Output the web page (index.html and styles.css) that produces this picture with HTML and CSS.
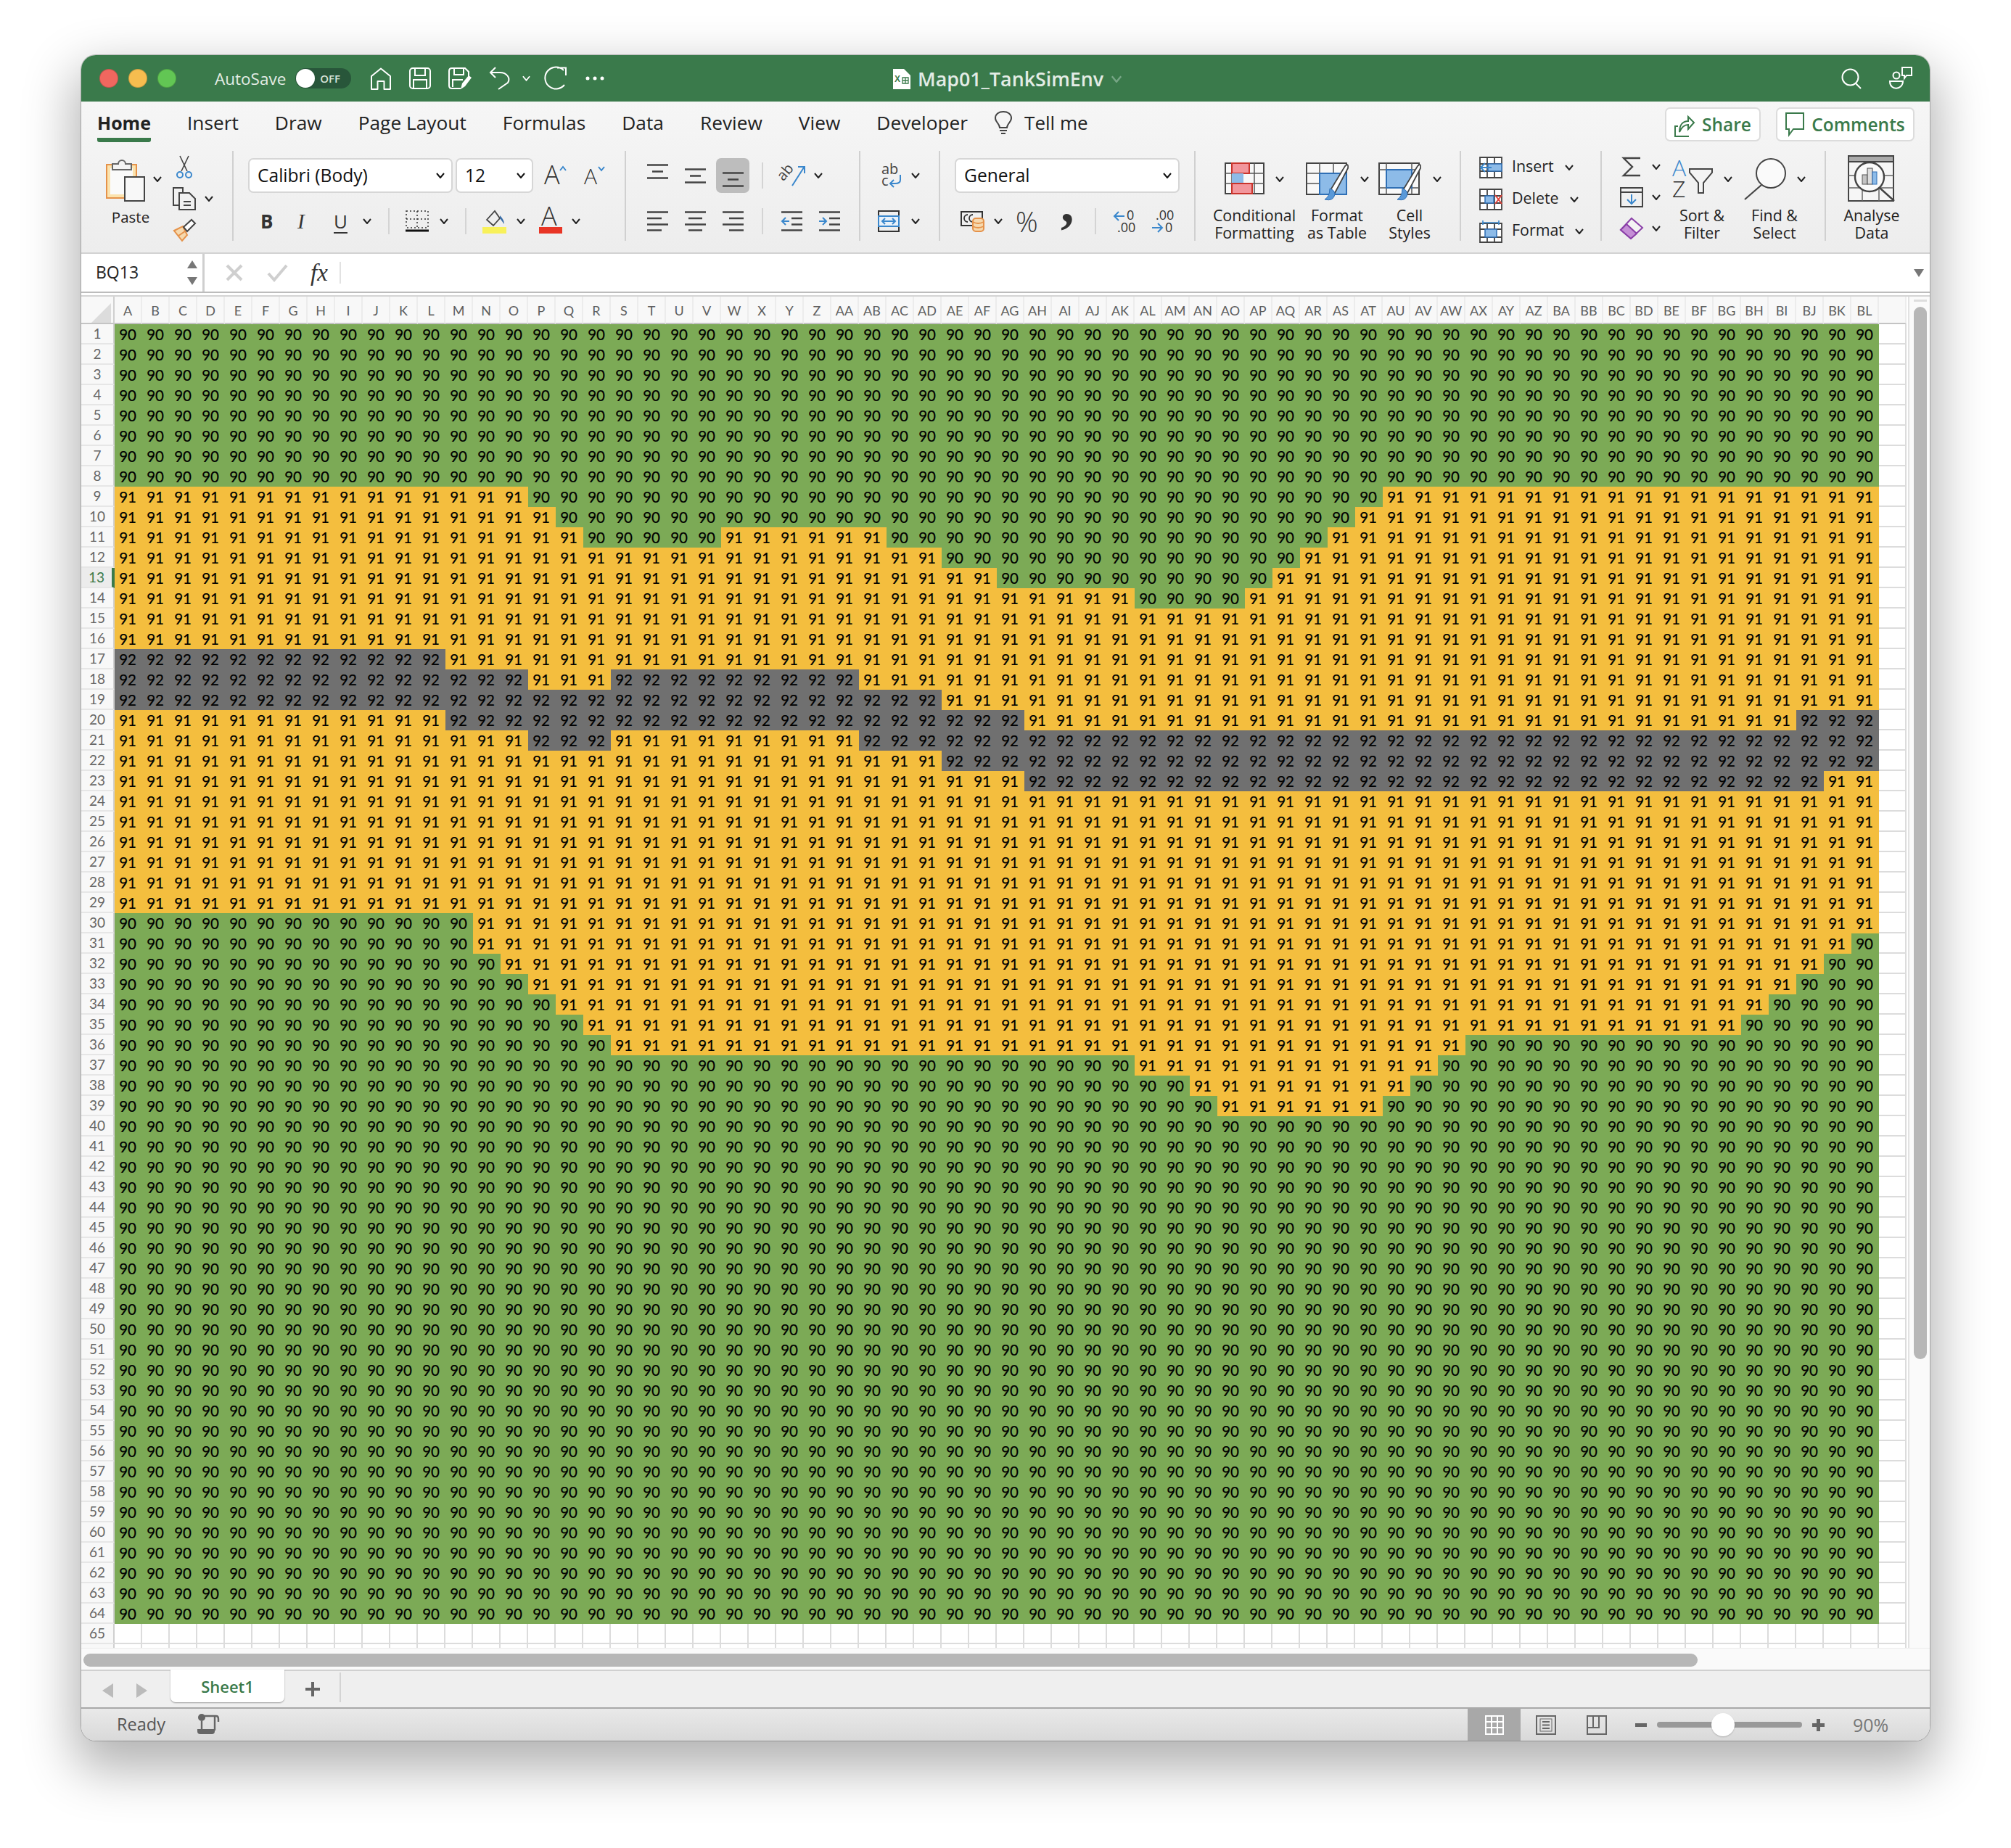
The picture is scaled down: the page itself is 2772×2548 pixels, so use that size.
FILE: index.html
```html
<!DOCTYPE html>
<html lang="en">
<head>
  <meta charset="UTF-8">
  <title>Map01_TankSimEnv</title>
  <link rel="stylesheet" href="styles.css">
</head>
<body>

  <!-- shared small icons -->
  <svg class="defs" width="0" height="0">
    <symbol id="chev" viewBox="0 0 12 8"><path d="M1 1 L6 7 L11 1" fill="none" stroke="currentColor" stroke-width="2"/></symbol>
    <symbol id="al-top" viewBox="0 0 29 21"><path d="M0 1.5H29M7 10.5H22M0 19.5H29" stroke="#444" stroke-width="2.4"/></symbol>
    <symbol id="al-left" viewBox="0 0 29 28"><path d="M0 1.5H29M0 10H20M0 18.5H29M0 26.5H20" stroke="#444" stroke-width="2.4"/></symbol>
    <symbol id="al-center" viewBox="0 0 29 28"><path d="M0 1.5H29M5 10H24M0 18.5H29M5 26.5H24" stroke="#444" stroke-width="2.4"/></symbol>
    <symbol id="al-right" viewBox="0 0 29 28"><path d="M0 1.5H29M9 10H29M0 18.5H29M9 26.5H29" stroke="#444" stroke-width="2.4"/></symbol>
  </svg>

  <div class="window">

    <header class="titlebar">
      <div class="lights"><i class="light red"></i><i class="light amber"></i><i class="light lime"></i></div>
      <span class="autosave">AutoSave</span>
      <span class="toggle"><i class="knob"></i><b>OFF</b></span>
      <div class="quick">
        <svg width="30" height="31" viewBox="0 0 30 31"><path d="M2 30V12L15 1.5L28 12V30H19.500V19H10.500V30Z" fill="none" stroke="#fff" stroke-width="2" stroke-linejoin="round"/></svg>
        <svg width="30" height="30" viewBox="0 0 30 30"><g fill="none" stroke="#fff" stroke-width="2"><rect x="1" y="1" width="28" height="28" rx="4"/><path d="M8 1V11H22V1M6 29V17H24V29"/></g></svg>
        <svg width="32" height="31" viewBox="0 0 32 31"><g fill="none" stroke="#fff" stroke-width="2"><path d="M17 29H5Q1 29 1 25V5Q1 1 5 1H23L28 6V13"/><path d="M8 1V10H21V1M6 27V17H20"/></g><path d="M17 30L19 22L28 11L32 14L23 26Z" fill="#fff"/></svg>
        <svg class="undo" width="30" height="32" viewBox="0 0 30 32"><path d="M9 1L2 8L9 15M2 8H15C25 8 30 16 26 22L13 31" fill="none" stroke="#fff" stroke-width="2"/></svg>
        <svg class="chev-sm" width="11" height="8"><use href="#chev"/></svg>
        <svg class="redo" width="33" height="32" viewBox="0 0 33 32"><path d="M19 1.500H31V12M28 5A15 15 0 1 0 29 25" fill="none" stroke="#fff" stroke-width="2"/></svg>
        <svg class="dots" width="26" height="6" viewBox="0 0 26 6"><circle cx="3" cy="3" r="2.500" fill="#fff"/><circle cx="13" cy="3" r="2.500" fill="#fff"/><circle cx="23" cy="3" r="2.500" fill="#fff"/></svg>
      </div>
      <div class="doc-title">
        <svg width="24" height="30" viewBox="0 0 24 30"><path d="M0 1H15L24 10V29H0Z" fill="#fff"/><text x="2" y="19" class="xl-x">X</text><path d="M13 13h8v8h-8zM13 17h8M17 13v8" fill="none" stroke="#3a7a4b" stroke-width="1.300"/></svg>
        <span>Map01_TankSimEnv</span>
        <svg class="faint-chev" width="16" height="10"><use href="#chev"/></svg>
      </div>
      <div class="title-right">
        <svg width="28" height="29" viewBox="0 0 28 29"><circle cx="12.500" cy="12.500" r="11" fill="none" stroke="#fff" stroke-width="2"/><path d="M20 21L27 28" stroke="#fff" stroke-width="2"/></svg>
        <svg width="33" height="32" viewBox="0 0 33 32"><g fill="none" stroke="#fff" stroke-width="2"><circle cx="10" cy="12" r="4.500"/><path d="M1 20H19C19 32 1 34 1 20Z"/><path d="M18 1H31V12H24L21 16V12H18Z"/></g></svg>
      </div>
    </header>

    <section class="ribbon">
      <nav class="ribbon-tabs">
        <a class="tab active">Home</a>
        <a class="tab">Insert</a>
        <a class="tab">Draw</a>
        <a class="tab">Page Layout</a>
        <a class="tab">Formulas</a>
        <a class="tab">Data</a>
        <a class="tab">Review</a>
        <a class="tab">View</a>
        <a class="tab">Developer</a>
        <span class="tell">
          <svg width="24" height="32" viewBox="0 0 24 32"><path d="M7 23C7 18 1 15 1 10C1 4 6 1 12 1S23 4 23 10C23 15 17 18 17 23ZM7 27H17M9 31H15" fill="none" stroke="#444" stroke-width="2"/></svg>
          Tell me
        </span>
        <div class="share-box">
          <a class="pill p-share">
            <svg width="28" height="36" viewBox="0 0 28 36"><path d="M20 34H1V20H5M7 28C7 18 12 13 19 13V7L27 15L19 24V18C14 18 10 21 7 28Z" fill="none" stroke="#3a7a4b" stroke-width="2"/></svg>
            Share
          </a>
          <a class="pill p-comments">
            <svg width="26" height="36" viewBox="0 0 26 36"><path d="M1 2H25V24H11L5 32V24H1Z" fill="none" stroke="#3a7a4b" stroke-width="2"/></svg>
            Comments
          </a>
        </div>
      </nav>

      <div class="ribbon-body">

        <div class="group g-clip">
          <div class="big paste">
            <div class="big-top">
              <svg width="54" height="60" viewBox="0 0 54 60">
                <rect x="1" y="9" width="41" height="46" fill="#fbe3ae" stroke="#e5924a" stroke-width="2"/>
                <rect x="6" y="14" width="31" height="36" fill="#fafafa"/>
                <path d="M9 16V8H17A5 5 0 0 1 27 8H35V16Z" fill="#f4f4f4" stroke="#666" stroke-width="2"/>
                <rect x="26" y="26" width="27" height="33" fill="#f8f8f8" stroke="#444" stroke-width="2"/>
              </svg>
              <svg class="chev" width="12" height="8"><use href="#chev"/></svg>
            </div>
            <span class="label">Paste</span>
          </div>
          <div class="clip-tools">
            <div class="tool-row">
              <svg width="32" height="32" viewBox="0 0 32 32"><path d="M10 1L20 22M22 1L12 22" stroke="#444" stroke-width="1.600" fill="none"/><circle cx="10" cy="27" r="4" fill="none" stroke="#3a87cc" stroke-width="2"/><circle cx="22" cy="27" r="4" fill="none" stroke="#3a87cc" stroke-width="2"/></svg>
            </div>
            <div class="tool-row">
              <svg width="32" height="32" viewBox="0 0 32 32"><g fill="none" stroke="#444" stroke-width="2"><path d="M9 25H1V1H14V7"/><path d="M9 8H23L31 16V31H9Z"/><path d="M15 20H25M15 25H25"/></g></svg>
              <svg class="chev" width="12" height="8"><use href="#chev"/></svg>
            </div>
            <div class="tool-row">
              <svg width="32" height="30" viewBox="0 0 32 30"><path d="M2 16L14 10L20 22L13 30Z" fill="#f6d9ae" stroke="#e5924a" stroke-width="2"/><path d="M8 23L17 17" stroke="#e5924a" stroke-width="2"/><path d="M15 11L20 17L31 6L26 1Z" fill="#fff" stroke="#444" stroke-width="2"/></svg>
            </div>
          </div>
        </div>

        <div class="group g-font rows">
          <div class="row font-r1">
            <div class="select s-font"><span>Calibri (Body)</span><svg class="chev" width="12" height="8"><use href="#chev"/></svg></div>
            <div class="select s-size"><span>12</span><svg class="chev" width="12" height="8"><use href="#chev"/></svg></div>
            <svg width="32" height="30" viewBox="0 0 32 30"><text x="0" y="27" class="ic-a big-a">A</text><path d="M22 8L26 3L30 8" fill="none" stroke="#3a87cc" stroke-width="2"/></svg>
            <svg width="30" height="30" viewBox="0 0 30 30"><text x="0" y="27" class="ic-a small-a">A</text><path d="M20 3L24 8L28 3" fill="none" stroke="#3a87cc" stroke-width="2"/></svg>
          </div>
          <div class="row font-r2">
            <span class="fmt bold">B</span>
            <span class="fmt italic">I</span>
            <span class="fmt under">U</span>
            <svg class="chev" width="12" height="8"><use href="#chev"/></svg>
            <i class="sep"></i>
            <svg width="32" height="30" viewBox="0 0 32 30"><path d="M1 1H31V24H1ZM16 1V24M1 12H31" fill="none" stroke="#333" stroke-width="1.500" stroke-dasharray="2 3"/><path d="M0 28H32" stroke="#111" stroke-width="3"/></svg>
            <svg class="chev" width="12" height="8"><use href="#chev"/></svg>
            <i class="sep"></i>
            <svg width="33" height="33" viewBox="0 0 33 33"><path d="M6 14L17 2L24 12L15 22Z" fill="none" stroke="#444" stroke-width="1.800"/><path d="M24 8Q30 14 30 20Q27 16 24 12Z" fill="#3a6ea8"/><rect x="0" y="24" width="33" height="9" fill="#f8f15a"/></svg>
            <svg class="chev" width="12" height="8"><use href="#chev"/></svg>
            <svg width="32" height="33" viewBox="0 0 32 33"><text x="3" y="22" class="ic-a big-a">A</text><rect x="0" y="24" width="32" height="9" fill="#e83525"/></svg>
            <svg class="chev" width="12" height="8"><use href="#chev"/></svg>
          </div>
        </div>

        <div class="group g-align rows">
          <div class="row align-r1">
            <svg class="up-9" width="29" height="21"><use href="#al-top"/></svg>
            <svg width="29" height="21"><use href="#al-top"/></svg>
            <span class="active-box"><svg width="29" height="21"><use href="#al-top"/></svg></span>
            <i class="sep"></i>
            <svg class="orient" width="36" height="32" viewBox="0 0 36 32"><text x="-4" y="16" class="ic-ab" transform="rotate(-50 8 14)">ab</text><path d="M14 30L30 5M22 4H31V13" fill="none" stroke="#3a87cc" stroke-width="2"/></svg>
            <svg class="chev" width="12" height="8"><use href="#chev"/></svg>
          </div>
          <div class="row align-r2">
            <svg width="29" height="28"><use href="#al-left"/></svg>
            <svg width="29" height="28"><use href="#al-center"/></svg>
            <svg width="29" height="28"><use href="#al-right"/></svg>
            <i class="sep"></i>
            <svg width="29" height="28" viewBox="0 0 29 28"><path d="M0 1.500H29M14 10H29M14 18.500H29M0 26.500H29" stroke="#444" stroke-width="2.400"/><path d="M11 14H1M6 9L1 14L6 19" fill="none" stroke="#3a87cc" stroke-width="2"/></svg>
            <svg width="29" height="28" viewBox="0 0 29 28"><path d="M0 1.500H29M14 10H29M14 18.500H29M0 26.500H29" stroke="#444" stroke-width="2.400"/><path d="M0 14H10M5 9L10 14L5 19" fill="none" stroke="#3a87cc" stroke-width="2"/></svg>
          </div>
        </div>

        <div class="group g-wrap rows">
          <div class="row wrap-r1">
            <svg width="30" height="32" viewBox="0 0 30 32"><text x="1" y="14" class="ic-ab">ab</text><text x="1" y="30" class="ic-ab">c</text><path d="M27 15V22Q27 27 20 27H14M18 22L13 27L18 32" fill="none" stroke="#3a87cc" stroke-width="2"/></svg>
            <svg class="chev" width="12" height="8"><use href="#chev"/></svg>
          </div>
          <div class="row wrap-r2">
            <svg width="30" height="30" viewBox="0 0 30 30"><rect x="1" y="1" width="28" height="28" fill="none" stroke="#333" stroke-width="2"/><path d="M1 8H29V22H1Z" fill="#e8f1fa" stroke="#3a87cc" stroke-width="2"/><path d="M6 15H24M10 11L6 15L10 19M20 11L24 15L20 19" fill="none" stroke="#3a87cc" stroke-width="2"/></svg>
            <svg class="chev" width="12" height="8"><use href="#chev"/></svg>
          </div>
        </div>

        <div class="group g-number rows">
          <div class="row num-r1">
            <div class="select s-general"><span>General</span><svg class="chev" width="12" height="8"><use href="#chev"/></svg></div>
          </div>
          <div class="row num-r2">
            <svg width="32" height="28" viewBox="0 0 32 28"><path d="M1 1H30V20H1Z" fill="none" stroke="#333" stroke-width="2"/><path d="M10 5A5 5 0 0 0 10 15M17 5A5 5 0 0 0 17 15" fill="none" stroke="#333" stroke-width="1.800"/><rect x="17" y="10" width="15" height="18" rx="4" fill="#f6d9ae" stroke="#e5924a" stroke-width="2"/><path d="M17 15Q24 19 32 15M17 21Q24 25 32 21" fill="none" stroke="#e5924a" stroke-width="1.800"/></svg>
            <svg class="chev" width="12" height="8"><use href="#chev"/></svg>
            <span class="pct">%</span>
            <span class="comma">,</span>
            <i class="sep"></i>
            <svg width="32" height="32" viewBox="0 0 32 32"><text x="19" y="14" class="ic-dec">0</text><text x="6" y="31" class="ic-dec">.00</text><path d="M16 9H2M8 3L2 9L8 15" fill="none" stroke="#3a87cc" stroke-width="2"/></svg>
            <svg width="32" height="32" viewBox="0 0 32 32"><text x="6" y="14" class="ic-dec">.00</text><text x="19" y="31" class="ic-dec">0</text><path d="M1 25H15M9 19L15 25L9 31" fill="none" stroke="#3a87cc" stroke-width="2"/></svg>
          </div>
        </div>

        <div class="group g-styles">
          <div class="big w-cf">
            <div class="big-top pt16">
              <svg width="55" height="44" viewBox="0 0 55 44">
                <path d="M1 1H54V43H1Z" fill="#f8f8f8" stroke="#444" stroke-width="2"/>
                <path d="M1 15H54M1 29H54M10 1V43M41 1V43" stroke="#555" stroke-width="1.500"/>
                <rect x="10" y="1" width="24" height="14" fill="#f2969c" stroke="#c9342c" stroke-width="2"/>
                <rect x="10" y="15" width="16" height="14" fill="#8dbbe8"/>
                <rect x="10" y="29" width="28" height="14" fill="#f2969c" stroke="#c9342c" stroke-width="2"/>
              </svg>
              <svg class="chev" width="12" height="8"><use href="#chev"/></svg>
            </div>
            <span class="label">Conditional</span>
            <span class="label">Formatting</span>
          </div>
          <div class="big w-ft">
            <div class="big-top pt16">
              <svg width="60" height="54" viewBox="0 0 60 54">
                <path d="M1 1H56V44H1Z" fill="#f8f8f8" stroke="#444" stroke-width="2"/>
                <path d="M1 15H56M1 29H56M19 1V44M38 1V44" stroke="#555" stroke-width="1.500"/>
                <rect x="19" y="15" width="37" height="29" fill="#8dbbe8" stroke="#2f6fb5" stroke-width="2"/>
                <path d="M34 38L54 5Q59 0 58 8L40 42Z" fill="#fff" stroke="#444" stroke-width="1.800"/>
                <path d="M33 36Q40 38 40 44Q38 54 26 51Q33 47 33 36Z" fill="#5a99d8" stroke="#2f6fb5"/>
              </svg>
              <svg class="chev" width="12" height="8"><use href="#chev"/></svg>
            </div>
            <span class="label">Format</span>
            <span class="label">as Table</span>
          </div>
          <div class="big w-cs">
            <div class="big-top pt16">
              <svg width="60" height="54" viewBox="0 0 60 54">
                <path d="M1 1H56V44H1Z" fill="#f8f8f8" stroke="#444" stroke-width="2"/>
                <path d="M1 10H56M1 35H56M11 1V44M46 1V44" stroke="#555" stroke-width="1.500"/>
                <rect x="11" y="10" width="35" height="25" fill="#8dbbe8" stroke="#2f6fb5" stroke-width="2"/>
                <path d="M34 38L54 5Q59 0 58 8L40 42Z" fill="#fff" stroke="#444" stroke-width="1.800"/>
                <path d="M33 36Q40 38 40 44Q38 54 26 51Q33 47 33 36Z" fill="#5a99d8" stroke="#2f6fb5"/>
              </svg>
              <svg class="chev" width="12" height="8"><use href="#chev"/></svg>
            </div>
            <span class="label">Cell</span>
            <span class="label">Styles</span>
          </div>
        </div>

        <div class="group g-cells">
          <div class="cell-row">
            <svg width="32" height="30" viewBox="0 0 32 30"><path d="M1 1H31V29H1ZM1 10H31M1 20H31M11 1V29M21 1V29" fill="#fff" stroke="#444" stroke-width="1.800"/><rect x="12" y="10" width="19" height="10" fill="#8dbbe8" stroke="#2f6fb5" stroke-width="1.500"/><path d="M17 15H2M8 9L2 15L8 21" fill="none" stroke="#3a87cc" stroke-width="2"/></svg>
            <span class="label">Insert</span>
            <svg class="chev" width="12" height="8"><use href="#chev"/></svg>
          </div>
          <div class="cell-row">
            <svg width="32" height="30" viewBox="0 0 32 30"><path d="M1 1H31V29H1ZM1 10H31M1 20H31M11 1V29M21 1V29" fill="#fff" stroke="#444" stroke-width="1.800"/><rect x="8" y="10" width="12" height="10" fill="#8dbbe8" stroke="#2f6fb5" stroke-width="1.500"/><path d="M22 9L31 21M31 9L22 21" stroke="#e2423a" stroke-width="2"/></svg>
            <span class="label">Delete</span>
            <svg class="chev" width="12" height="8"><use href="#chev"/></svg>
          </div>
          <div class="cell-row">
            <svg width="32" height="30" viewBox="0 0 32 30"><path d="M1 4H31V30H1ZM1 12H31M1 23H31M11 4V30M21 4V30" fill="#fff" stroke="#444" stroke-width="1.800"/><rect x="8" y="12" width="16" height="11" fill="#8dbbe8" stroke="#2f6fb5" stroke-width="1.500"/><path d="M5 0V6M27 0V6M5 3H27" fill="none" stroke="#3a87cc" stroke-width="1.600"/></svg>
            <span class="label">Format</span>
            <svg class="chev" width="12" height="8"><use href="#chev"/></svg>
          </div>
        </div>

        <div class="group g-edit">
          <div class="edit-tools">
            <div class="tool-row">
              <svg width="32" height="28" viewBox="0 0 32 28"><path d="M28 2H5L17 14L5 26H28" fill="none" stroke="#444" stroke-width="2.400"/></svg>
              <svg class="chev" width="12" height="8"><use href="#chev"/></svg>
            </div>
            <div class="tool-row">
              <svg width="32" height="28" viewBox="0 0 32 28"><path d="M1 1H31V27H1ZM1 7H31" fill="none" stroke="#444" stroke-width="2"/><path d="M16 10V23M10 17L16 23L22 17" fill="none" stroke="#3a87cc" stroke-width="2"/></svg>
              <svg class="chev" width="12" height="8"><use href="#chev"/></svg>
            </div>
            <div class="tool-row">
              <svg width="32" height="30" viewBox="0 0 32 30"><path d="M16 1L31 14L15 29L1 17Z" fill="#f4f4f4" stroke="#8a3fa8" stroke-width="2"/><path d="M9 9L23 22L15 29L1 17Z" fill="#c58fd6" stroke="#8a3fa8" stroke-width="2"/></svg>
              <svg class="chev" width="12" height="8"><use href="#chev"/></svg>
            </div>
          </div>
          <div class="big w-100">
            <div class="big-top pt11">
              <svg width="56" height="54" viewBox="0 0 56 54"><text x="0" y="24" class="ic-az blue">A</text><text x="0" y="53" class="ic-az">Z</text><path d="M24 14H55V19L43 33V47H36V33L24 19Z" fill="#f4f4f4" stroke="#444" stroke-width="2"/></svg>
              <svg class="chev" width="12" height="8"><use href="#chev"/></svg>
            </div>
            <span class="label">Sort &amp;</span>
            <span class="label">Filter</span>
          </div>
          <div class="big w-100">
            <div class="big-top pt10">
              <svg width="58" height="58" viewBox="0 0 58 58"><ellipse cx="37" cy="21" rx="20" ry="20" fill="#fafafa" stroke="#444" stroke-width="2"/><path d="M24 37L1 57" stroke="#444" stroke-width="2.200"/></svg>
              <svg class="chev" width="12" height="8"><use href="#chev"/></svg>
            </div>
            <span class="label">Find &amp;</span>
            <span class="label">Select</span>
          </div>
        </div>

        <div class="group g-data">
          <div class="big w-data">
            <div class="big-top pt6">
              <svg width="66" height="64" viewBox="0 0 66 64">
                <rect x="1" y="1" width="62" height="62" fill="#f6f6f6" stroke="#444" stroke-width="2"/>
                <rect x="1" y="1" width="62" height="8" fill="#aaa" stroke="#444" stroke-width="2"/>
                <path d="M1 28H63M1 45H63M20 45V63M43 45V63" stroke="#666" stroke-width="1.500"/>
                <circle cx="30" cy="30" r="20" fill="#fafafa" stroke="#444" stroke-width="2.400"/>
                <rect x="20" y="27" width="7" height="13" fill="#c4c4c4" stroke="#555"/>
                <rect x="27" y="18" width="7" height="22" fill="#ddd" stroke="#444"/>
                <rect x="34" y="23" width="6" height="17" fill="#8dbbe8" stroke="#2f6fb5"/>
                <path d="M44 45L64 63" stroke="#444" stroke-width="2.400"/>
              </svg>
            </div>
            <span class="label">Analyse</span>
            <span class="label">Data</span>
          </div>
        </div>

      </div>
    </section>

    <div class="formula-bar">
      <div class="name-box">
        <span>BQ13</span>
        <div class="spin"><i class="tri-up"></i><i class="tri-down"></i></div>
      </div>
      <svg class="fb-x" width="24" height="24" viewBox="0 0 24 24"><path d="M2 2L22 22M22 2L2 22" stroke="#cfcfcf" stroke-width="4"/></svg>
      <svg class="fb-check" width="29" height="24" viewBox="0 0 29 24"><path d="M2 13L10 22L27 2" fill="none" stroke="#cfcfcf" stroke-width="4"/></svg>
      <span class="fx">fx</span>
      <i class="fb-sep"></i>
      <i class="tri-down fb-more"></i>
    </div>

    <div class="sheet">
      <div class="grid" id="grid"></div>
      <div class="vscroll"><i class="vhandle"></i><i class="vthumb"></i></div>
    </div>

    <div class="hscroll"><i class="hthumb"></i></div>

    <div class="tabbar">
      <i class="nav-left"></i>
      <i class="nav-right"></i>
      <div class="sheet-tab">Sheet1</div>
      <span class="add-sheet"></span>
      <i class="tab-sep"></i>
    </div>

    <footer class="statusbar">
      <span class="ready">Ready</span>
      <svg width="30" height="28" viewBox="0 0 30 28"><circle cx="6" cy="5" r="5" fill="#666"/><path d="M10 3H26Q29 3 29 7V11M24 3V23M6 10V21" fill="none" stroke="#666" stroke-width="2.400"/><path d="M0 21H24V24Q24 28 20 28H4Q0 28 0 24Z" fill="#666"/></svg>
      <div class="status-right">
        <span class="view-btn on"><svg width="26" height="27" viewBox="0 0 26 27"><path d="M1 1H25V26H1ZM1 9H25M1 17H25M9 1V26M17 1V26" fill="none" stroke="#fff" stroke-width="2"/></svg></span>
        <span class="view-btn"><svg width="28" height="27" viewBox="0 0 28 27"><path d="M1 1H27V26H1Z" fill="none" stroke="#666" stroke-width="2"/><rect x="6" y="5" width="16" height="17" fill="none" stroke="#666"/><path d="M9 9H19M9 13.500H19M9 18H19" stroke="#666" stroke-width="2"/></svg></span>
        <span class="view-btn"><svg width="28" height="27" viewBox="0 0 28 27"><path d="M1 1H27V26H1ZM1 17H17V1M9 1V17" fill="none" stroke="#666" stroke-width="2"/></svg></span>
        <div class="zoom">
          <i class="zoom-minus"></i>
          <div class="slider"><i class="slider-knob"></i></div>
          <i class="zoom-plus"></i>
          <span class="zoom-val">90%</span>
        </div>
      </div>
    </footer>

  </div>

  <script src="script.js"></script>
</body>
</html>
```

FILE: styles.css
```css
* {
  box-sizing: border-box;
}

html, body {
  margin: 0;
  height: 2548px;
  overflow: hidden;
}

body {
  background-color: #fff;
  font-family: "Open Sans", sans-serif;
  color: #222;
}

i {
  display: block;
}

svg {
  overflow: visible;
}

.defs {
  position: absolute;
}

.window {
  width: 2548px;
  height: 2324px;
  margin: 76px 0 0 112px;
  border-radius: 20px;
  overflow: hidden;
  display: flex;
  flex-direction: column;
  box-shadow: 0 0 0 1px rgba(0, 0, 0, 0.22), 0 30px 70px 10px rgba(0, 0, 0, 0.3);
}

/* title bar */
.titlebar {
  height: 64px;
  flex: none;
  background-color: #3a7a4b;
  display: flex;
  align-items: center;
  color: #fff;
  position: relative;
}

.lights {
  display: flex;
  gap: 14px;
  margin-left: 25px;
}

.light {
  width: 26px;
  height: 26px;
  border-radius: 50%;
  border: 1px solid rgba(0, 0, 0, 0.18);
}

.red { background-color: #f0675f; }
.amber { background-color: #f6bd4f; }
.lime { background-color: #62c654; }

.autosave {
  margin-left: 53px;
  font-size: 22.500px;
  font-weight: 500;
  color: #e3ece5;
}

.toggle {
  margin-left: 13px;
  width: 77px;
  height: 28px;
  border-radius: 14px;
  background-color: #28563a;
  display: flex;
  align-items: center;
  gap: 7px;
  padding-left: 1px;
}

.knob {
  width: 26px;
  height: 26px;
  border-radius: 50%;
  background-color: #fff;
}

.toggle b {
  font-size: 15px;
  font-weight: 600;
  color: #d8e4db;
}

.quick {
  display: flex;
  align-items: center;
  margin-left: 26px;
  gap: 24px;
  color: #fff;
}

.quick .undo { margin-right: -8px; }
.quick .chev-sm { margin-right: -6px; }
.quick .dots { margin-left: 1px; }

.doc-title {
  position: absolute;
  left: 1119px;
  top: 14px;
  display: flex;
  align-items: center;
  gap: 10px;
  font-size: 26.800px;
  font-weight: 600;
  color: #e3ece5;
}

.faint-chev {
  color: #76a585;
}

.xl-x {
  font-family: "Liberation Sans", sans-serif;
  font-size: 12px;
  fill: #3a7a4b;
}

.title-right {
  margin-left: auto;
  margin-right: 23px;
  display: flex;
  align-items: center;
  gap: 38px;
}

/* ribbon */
.ribbon {
  height: 210px;
  flex: none;
  background: linear-gradient(#f6f6f6, #ededed);
  border-bottom: 2px solid #d2d2d2;
}

.ribbon-tabs {
  height: 68px;
  display: flex;
  align-items: flex-start;
  padding-left: 22px;
  gap: 50px;
}

.tab {
  display: block;
  padding: 12px 0 4px;
  line-height: 34px;
  font-size: 26.300px;
  border-bottom: 6px solid transparent;
  color: #222;
  white-space: nowrap;
}

.tab.active {
  font-size: 25px;
  font-weight: 700;
  border-bottom-color: #3a7a4b;
  border-radius: 0 0 3px 3px;
}

.tell {
  display: flex;
  align-items: center;
  gap: 17px;
  height: 34px;
  margin: 12px 0 0 -13px;
  font-size: 26px;
}

.share-box {
  margin-left: auto;
  margin-right: 21px;
  margin-top: 8px;
  display: flex;
  gap: 21px;
}

.pill {
  height: 47px;
  display: flex;
  align-items: center;
  justify-content: center;
  gap: 10px;
  background-color: #fff;
  border: 2px solid #dcdcdc;
  border-radius: 7px;
  font-size: 24.500px;
  font-weight: 600;
  color: #3a7a4b;
}

.p-share { width: 132px; }
.p-comments { width: 191px; }

.ribbon-body {
  display: flex;
  height: 124px;
  position: relative;
}

.group {
  flex: none;
  height: 124px;
  border-right: 2px solid #d0d0d0;
  display: flex;
}

.g-clip { width: 210px; padding-left: 22px; }
.g-font { width: 541px; padding-left: 20px; }
.g-align { width: 323px; }
.g-wrap { width: 110px; }
.g-number { width: 352px; }
.g-styles { width: 366px; padding-left: 24px; }
.g-cells { width: 194px; padding: 8px 0 0 25px; flex-direction: column; gap: 14px; }
.g-edit { width: 309px; padding-left: 25px; }
.g-data { border-right: none; }

.label {
  display: block;
  font-size: 21.400px;
  line-height: 24px;
  white-space: nowrap;
  position: relative;
  top: 1px;
}

.cell-row .label {
  top: -2px;
}

.big {
  display: flex;
  flex-direction: column;
  align-items: center;
}

.big-top {
  height: 79px;
  display: flex;
  align-items: flex-start;
  gap: 15px;
}

.pt16 { padding-top: 16px; }
.pt16 .chev { margin-top: 19px; }
.pt11 { padding-top: 11px; }
.pt11 .chev { margin-top: 24px; }
.pt10 { padding-top: 10px; }
.pt10 .chev { margin-top: 25px; }
.pt6 { padding-top: 6px; }

.paste {
  width: 92px;
}

.paste .big-top {
  padding: 10px 0 0 8px;
  gap: 11px;
}

.paste .big-top .chev {
  margin-top: 25px;
}

.paste .label {
  font-size: 20.500px;
  top: 0;
}

.w-cf { width: 114px; }
.w-ft { width: 114px; }
.w-cs { width: 86px; }
.w-100 { width: 100px; }
.w-data { width: 126px; }

.clip-tools {
  margin-left: 12px;
  padding-top: 6px;
  display: flex;
  flex-direction: column;
  gap: 12px;
}

.edit-tools {
  width: 63px;
  padding-top: 8px;
  display: flex;
  flex-direction: column;
  gap: 14px;
}

.tool-row {
  display: flex;
  align-items: center;
  gap: 12px;
}

.cell-row {
  height: 30px;
  display: flex;
  align-items: center;
  gap: 13px;
}

.cell-row .chev {
  margin-left: 2px;
}

.rows {
  flex-direction: column;
  gap: 15px;
  padding-top: 10px;
}

.row {
  height: 48px;
  display: grid;
  align-items: center;
  justify-items: start;
}

.font-r1 { grid-template-columns: 286px 122px 55px auto; }
.font-r2 {
  padding-left: 17px;
  grid-template-columns: 51px 50px 40px 35px 24px 47px 35px 24px 47px 31px 45px auto;
}
.align-r1 {
  padding-left: 29px;
  grid-template-columns: 52px 43px 63px 25px 47px auto;
}
.align-r2 {
  padding-left: 29px;
  grid-template-columns: 52px 52px 54px 27px 52px auto;
}
.wrap-r1 {
  padding-left: 28px;
  grid-template-columns: 42px auto;
}
.wrap-r2 {
  padding-left: 24px;
  grid-template-columns: 46px auto;
}
.num-r1 {
  padding-left: 20px;
  grid-template-columns: auto;
}
.num-r2 {
  padding-left: 28px;
  grid-template-columns: 46px 32px 60px 47px 25px 53px auto;
}

.up-9 { margin-top: -12px; }
.orient { margin-left: 3px; }

.sep {
  width: 2px;
  height: 36px;
  background-color: #d4d4d4;
}

.select {
  height: 48px;
  background-color: #fff;
  border: 2px solid #d6d6d6;
  border-radius: 7px;
  display: flex;
  align-items: center;
  justify-content: space-between;
  padding: 0 9px 0 11px;
  font-size: 24.600px;
  color: #111;
}

.select span {
  margin-top: -2px;
}

.s-font { width: 282px; }
.s-size { width: 107px; }
.s-general { width: 310px; }

.fmt {
  font-size: 26px;
  line-height: 1;
  color: #333;
}

.fmt.bold {
  font-weight: 700;
}

.fmt.italic {
  font-family: "Liberation Serif", serif;
  font-style: italic;
  font-size: 29px;
}

.fmt.under {
  text-decoration: underline;
  text-underline-offset: 5px;
}

.active-box {
  width: 46px;
  height: 48px;
  background-color: #bdbdbd;
  border-radius: 7px;
  display: flex;
  align-items: flex-end;
  justify-content: center;
  padding-bottom: 8px;
}

.ic-a {
  font-family: "Open Sans", sans-serif;
  fill: #333;
}

.big-a { font-size: 36px; font-weight: 300; }
.small-a { font-size: 30px; font-weight: 300; }

.ic-ab {
  font-family: "Open Sans", sans-serif;
  font-size: 20px;
  fill: #444;
}

.ic-dec {
  font-family: "Open Sans", sans-serif;
  font-size: 18px;
  fill: #333;
}

.ic-az {
  font-family: "Open Sans", sans-serif;
  font-size: 32px;
  font-weight: 300;
  fill: #333;
}

.ic-az.blue { fill: #3a87cc; }

.pct {
  font-size: 38px;
  font-weight: 300;
  color: #333;
  line-height: 1;
  margin-left: -2px;
}

.comma {
  font-family: "Liberation Serif", serif;
  font-size: 74px;
  font-weight: 700;
  line-height: 1;
  height: 46px;
  margin-top: -76px;
  color: #333;
}

/* formula bar */
.formula-bar {
  height: 54px;
  flex: none;
  background-color: #fff;
  border-bottom: 2px solid #bcbcbc;
  display: flex;
  align-items: center;
  position: relative;
}

.name-box {
  width: 170px;
  height: 52px;
  display: flex;
  align-items: center;
  justify-content: space-between;
  border-right: 3px solid #cfcfcf;
  padding: 0 7px 0 20px;
  font-size: 23px;
  color: #222;
}

.name-box span {
  margin-top: -2px;
}

.spin {
  display: flex;
  flex-direction: column;
  gap: 12px;
}

.tri-up, .tri-down {
  width: 0;
  height: 0;
  border-left: 7px solid transparent;
  border-right: 7px solid transparent;
}

.tri-up { border-bottom: 11px solid #777; }
.tri-down { border-top: 11px solid #777; }

.fb-x { margin-left: 29px; }
.fb-check { margin-left: 33px; }

.fx {
  margin-left: 31px;
  font-family: "Liberation Serif", serif;
  font-style: italic;
  font-size: 33px;
  color: #333;
}

.fb-sep {
  margin-left: 16px;
  width: 2px;
  height: 30px;
  background-color: #e2e2e2;
}

.fb-more {
  margin-left: auto;
  margin-right: 8px;
}

/* grid */
.sheet {
  flex: 1;
  min-height: 0;
  margin-top: 3px;
  display: flex;
  background-color: #fff;
  overflow: hidden;
  border-top: 2px solid #d4d4d4;
}

.grid {
  width: 2518px;
  flex: none;
  display: grid;
  grid-template-columns: 46px repeat(65, 38px);
  grid-template-rows: 38px;
  grid-auto-rows: 28px;
  font-family: Lato, sans-serif;
  overflow: hidden;
}

.corner {
  background-color: #f8f8f8;
  border-right: 2px solid #d0d0d0;
  border-bottom: 2px solid #c4c4c4;
  padding: 9px 0 0 14px;
}

.corner svg {
  display: block;
}

.ch {
  background-color: #f8f8f8;
  border-right: 2px solid #ececec;
  border-bottom: 2px solid #c4c4c4;
  text-align: center;
  line-height: 38px;
  font-size: 18px;
  color: #5e5e5e;
}

.rh {
  background-color: #f8f8f8;
  border-right: 2px solid #d0d0d0;
  border-bottom: 2px solid #e6e6e6;
  text-align: center;
  line-height: 26px;
  font-size: 19px;
  color: #666;
}

.rh.sel {
  background-color: #ececec;
  color: #3a7a4b;
  border-right: 4px solid #3a7a4b;
}

.c {
  text-align: right;
  padding-right: 8px;
  line-height: 28px;
  font-size: 20.500px;
  color: #000;
  -webkit-text-stroke: 0.2px #000;
}

.v90 { background-color: #7caa56; }
.v91 { background-color: #f4be3e; }
.v92 { background-color: #707070; }

.blank {
  border-right: 2px solid #dcdcdc;
  border-bottom: 2px solid #dcdcdc;
}

.vscroll {
  flex: 1;
  position: relative;
  background-color: #fafafa;
  border-left: 2px solid #e2e2e2;
}

.vhandle {
  width: 18px;
  height: 3px;
  background-color: #ddd;
  margin: 4px 0 0 6px;
}

.vthumb {
  width: 18px;
  height: 1451px;
  background-color: #b7b7b7;
  border-radius: 9px;
  margin: 7px 0 0 6px;
}

.hscroll {
  height: 30px;
  flex: none;
  background-color: #fafafa;
  padding: 7px 0 0 3px;
  border-top: 1px solid #ececec;
}

.hthumb {
  width: 2225px;
  height: 18px;
  background-color: #b7b7b7;
  border-radius: 9px;
}

/* sheet tabs */
.tabbar {
  height: 52px;
  flex: none;
  background-color: #efefef;
  border-top: 2px solid #d0d0d0;
  display: flex;
  align-items: flex-start;
  position: relative;
}

.nav-left, .nav-right {
  width: 0;
  height: 0;
  margin-top: 17px;
  border-top: 10px solid transparent;
  border-bottom: 10px solid transparent;
}

.nav-left {
  margin-left: 29px;
  border-right: 15px solid #bbb;
}

.nav-right {
  margin-left: 32px;
  border-left: 15px solid #bbb;
}

.sheet-tab {
  width: 157px;
  height: 45px;
  margin: -2px 0 0 32px;
  background-color: #fff;
  border-radius: 0 0 7px 7px;
  box-shadow: 0 1px 2px rgba(0, 0, 0, 0.35);
  color: #3a7a4b;
  font-weight: 600;
  font-size: 22px;
  text-align: center;
  line-height: 46px;
}

.add-sheet {
  width: 20px;
  height: 20px;
  margin: 15px 0 0 29px;
  background:
    linear-gradient(#666, #666) center / 20px 4px no-repeat,
    linear-gradient(#666, #666) center / 4px 20px no-repeat;
}

.tab-sep {
  width: 2px;
  height: 41px;
  margin: 2px 0 0 27px;
  background-color: #d4d4d4;
}

/* status bar */
.statusbar {
  height: 46px;
  flex: none;
  background: linear-gradient(#e9e9e9, #d9d9d9);
  border-top: 2px solid #a9a9a9;
  display: flex;
  align-items: center;
  color: #555;
}

.ready {
  margin-left: 49px;
  margin-top: -3px;
  font-size: 23.500px;
  width: 111px;
}

.statusbar > svg {
  margin-top: -3px;
}

.status-right {
  margin-left: auto;
  height: 100%;
  display: flex;
  align-items: center;
}

.view-btn {
  width: 70px;
  height: 100%;
  display: flex;
  align-items: center;
  justify-content: center;
}

.view-btn.on {
  width: 73px;
  background-color: #a8a8a8;
}

.zoom {
  display: flex;
  align-items: center;
  margin-left: 18px;
}

.zoom-minus {
  width: 16px;
  height: 5px;
  background-color: #666;
}

.zoom-plus {
  width: 17px;
  height: 17px;
  margin-left: 14px;
  background:
    linear-gradient(#666, #666) center / 17px 5px no-repeat,
    linear-gradient(#666, #666) center / 5px 17px no-repeat;
}

.slider {
  width: 200px;
  height: 8px;
  margin-left: 14px;
  border-radius: 4px;
  background-color: #999;
  position: relative;
}

.slider-knob {
  position: absolute;
  left: 75px;
  top: -12px;
  width: 32px;
  height: 32px;
  border-radius: 50%;
  background-color: #fff;
  box-shadow: 0 1px 2px rgba(0, 0, 0, 0.2);
}

.zoom-val {
  width: 106px;
  margin-left: 39px;
  font-size: 25px;
  color: #777;
}
```

FILE: script.js
```js
// runs for each row that is not all 90: [end column (exclusive), value]
var runs = {
  9: [[15, 91], [46, 90], [64, 91]],
  10: [[16, 91], [45, 90], [64, 91]],
  11: [[17, 91], [22, 90], [28, 91], [44, 90], [64, 91]],
  12: [[30, 91], [43, 90], [64, 91]],
  13: [[32, 91], [42, 90], [64, 91]],
  14: [[37, 91], [41, 90], [64, 91]],
  15: [[64, 91]],
  16: [[64, 91]],
  17: [[12, 92], [64, 91]],
  18: [[15, 92], [18, 91], [27, 92], [64, 91]],
  19: [[30, 92], [64, 91]],
  20: [[12, 91], [33, 92], [61, 91], [64, 92]],
  21: [[15, 91], [18, 92], [27, 91], [64, 92]],
  22: [[30, 91], [64, 92]],
  23: [[33, 91], [62, 92], [64, 91]],
  24: [[64, 91]],
  25: [[64, 91]],
  26: [[64, 91]],
  27: [[64, 91]],
  28: [[64, 91]],
  29: [[64, 91]],
  30: [[13, 90], [64, 91]],
  31: [[13, 90], [63, 91], [64, 90]],
  32: [[14, 90], [62, 91], [64, 90]],
  33: [[15, 90], [61, 91], [64, 90]],
  34: [[16, 90], [60, 91], [64, 90]],
  35: [[17, 90], [59, 91], [64, 90]],
  36: [[18, 90], [49, 91], [64, 90]],
  37: [[37, 90], [48, 91], [64, 90]],
  38: [[39, 90], [47, 91], [64, 90]],
  39: [[40, 90], [46, 91], [64, 90]]
};

function colName(i) {
  var abc = "ABCDEFGHIJKLMNOPQRSTUVWXYZ";
  return i < 26 ? abc[i] : abc[Math.floor(i / 26) - 1] + abc[i % 26];
}

function valueAt(row, col) {
  var list = runs[row];
  if (!list) return 90;
  for (var i = 0; i < list.length; i++) {
    if (col < list[i][0]) return list[i][1];
  }
  return 90;
}

var html = '<div class="corner"><svg width="27" height="27" viewBox="0 0 27 27"><path d="M27 0V27H0Z" fill="#dcdcdc"/></svg></div>';

for (var c = 0; c < 65; c++) {
  html += '<div class="ch">' + (c < 64 ? colName(c) : "") + "</div>";
}

for (var r = 1; r <= 66; r++) {
  html += '<div class="rh' + (r === 13 ? " sel" : "") + '">' + r + "</div>";
  for (var k = 0; k < 65; k++) {
    if (r <= 64 && k < 64) {
      var v = valueAt(r, k);
      html += '<div class="c v' + v + '">' + v + "</div>";
    } else {
      html += '<div class="blank"></div>';
    }
  }
}

document.getElementById("grid").innerHTML = html;
```
